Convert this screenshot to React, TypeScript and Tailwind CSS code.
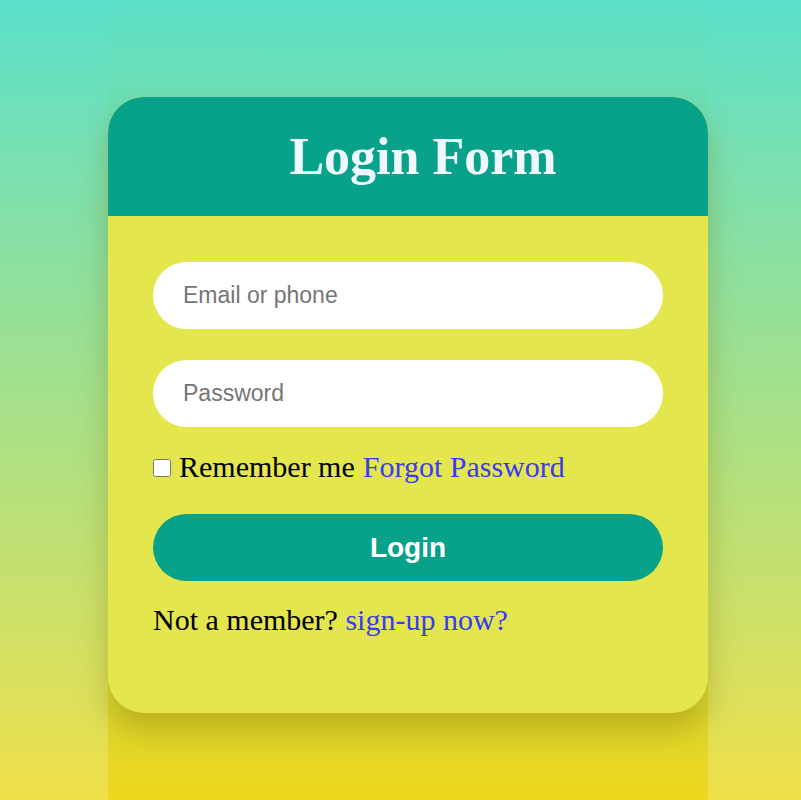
import React from 'react';

const App: React.FC = () => {
  return (
    <div className="min-h-screen h-[800px] overflow-hidden flex pl-[108px] bg-[linear-gradient(to_bottom,#5be0cb,#f0e04a)]">
      {/* Center column */}
      <div className="w-[600px] h-full pt-[97px] bg-[linear-gradient(to_bottom,#5ce0c8,#eed61c)]">
        {/* Card */}
        <div className="w-[600px] rounded-[36px] overflow-hidden bg-[#e3e64d] shadow-[0_18px_30px_rgba(120,110,0,0.35)]">
          {/* Header */}
          <div className="h-[119px] bg-[#08a189] flex items-center justify-center pl-[30px]">
            <h1 className="text-[52px] font-bold text-[#f0f8ff] font-['Liberation_Serif',serif] leading-none">
              Login Form
            </h1>
          </div>

          {/* Form */}
          <form className="px-[45px] pt-[46px] pb-[76px]">
            <input
              type="text"
              placeholder="Email or phone"
              className="block w-full h-[67px] rounded-full bg-white px-[30px] text-[23px] font-['Liberation_Sans',sans-serif] text-black placeholder:text-[#757575] outline-none"
            />
            <input
              type="password"
              placeholder="Password"
              className="block w-full h-[67px] mt-[31px] rounded-full bg-white px-[30px] text-[23px] font-['Liberation_Sans',sans-serif] text-black placeholder:text-[#757575] outline-none"
            />

            <div className="mt-[23px] flex items-center h-[34px] text-[30px] leading-[34px] font-['Liberation_Serif',serif] text-black">
              <input type="checkbox" className="w-[18px] h-[18px] m-0 mr-[8px] mt-[2px]" />
              <span>Remember me</span>
              <a href="#" className="ml-[8px] text-[#3a3af5]">
                Forgot Password
              </a>
            </div>

            <button
              type="button"
              className="block w-full h-[67px] mt-[30px] rounded-full bg-[#08a189] text-white text-[28px] font-bold font-['Liberation_Sans',sans-serif]"
            >
              Login
            </button>

            <p className="mt-[22px] text-[30px] leading-[34px] font-['Liberation_Serif',serif] text-black">
              Not a member?{' '}
              <a href="#" className="text-[#3a3af5]">
                sign-up now?
              </a>
            </p>
          </form>
        </div>
      </div>
    </div>
  );
};

export default App;
